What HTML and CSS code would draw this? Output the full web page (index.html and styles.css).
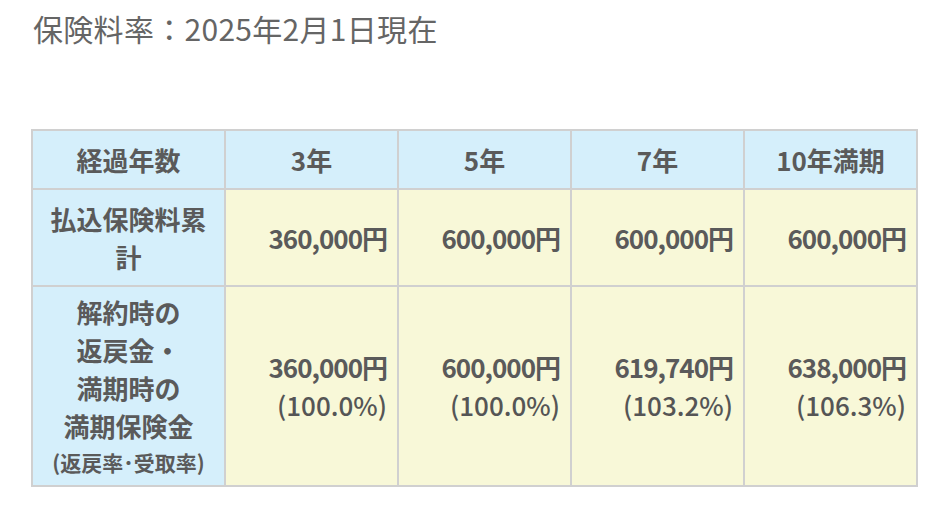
FILE: index.html
```html
<!DOCTYPE html>
<html lang="ja">
<head>
<meta charset="utf-8">
<link rel="stylesheet" href="styles.css">
</head>
<body>
<div class="page">
  <p class="title">保険料率：2025年2月1日現在</p>
  <table class="rates">
    <colgroup>
      <col class="c-head">
      <col class="c-val">
      <col class="c-val">
      <col class="c-val">
      <col class="c-val">
    </colgroup>
    <tr class="head">
      <th>経過年数</th>
      <th>3年</th>
      <th>5年</th>
      <th>7年</th>
      <th>10年満期</th>
    </tr>
    <tr>
      <th class="rowhead">払込保険料累計</th>
      <td><span class="amt">360,000円</span></td>
      <td><span class="amt">600,000円</span></td>
      <td><span class="amt">600,000円</span></td>
      <td><span class="amt">600,000円</span></td>
    </tr>
    <tr class="big">
      <th class="rowhead">解約時の<br>返戻金・<br>満期時の<br>満期保険金<div class="small">(返戻率･受取率)</div></th>
      <td><span class="amt">360,000円</span><br><span class="pct">(100.0%)</span></td>
      <td><span class="amt">600,000円</span><br><span class="pct">(100.0%)</span></td>
      <td><span class="amt">619,740円</span><br><span class="pct">(103.2%)</span></td>
      <td><span class="amt">638,000円</span><br><span class="pct">(106.3%)</span></td>
    </tr>
  </table>
</div>
</body>
</html>
```
FILE: styles.css
```css
html, body {
  margin: 0;
  padding: 0;
  background: #ffffff;
}
.page {
  padding: 8px 31px 0 31px;
  font-family: "Noto Sans CJK JP", "Noto Sans", sans-serif;
  color: #666666;
}
.title {
  margin: 0 0 0 2px;
  font-size: 30px;
  line-height: 40px;
  letter-spacing: 0.3px;
  color: #656565;
  font-weight: 400;
}
.rates {
  margin-top: 81px;
  width: 887px;
  border-collapse: collapse;
  table-layout: fixed;
  font-size: 26px;
  color: #5a5a5a;
}
.c-head { width: 193px; }
.rates th, .rates td {
  border: 2px solid #d0d0d0;
  padding: 10px 10px 9px 10px;
  line-height: 38px;
  font-weight: 700;
}
.rates th {
  background: #d5effb;
  text-align: center;
}
.rates td {
  background: #f8f8d8;
  text-align: right;
}
.big th, .big td {
  padding-top: 6px;
  padding-bottom: 6px;
}
.amt {
  letter-spacing: -1px;
}
.small {
  font-size: 21px;
  line-height: 34px;
}
.pct {
  font-weight: 500;
  color: #555555;
}
```
